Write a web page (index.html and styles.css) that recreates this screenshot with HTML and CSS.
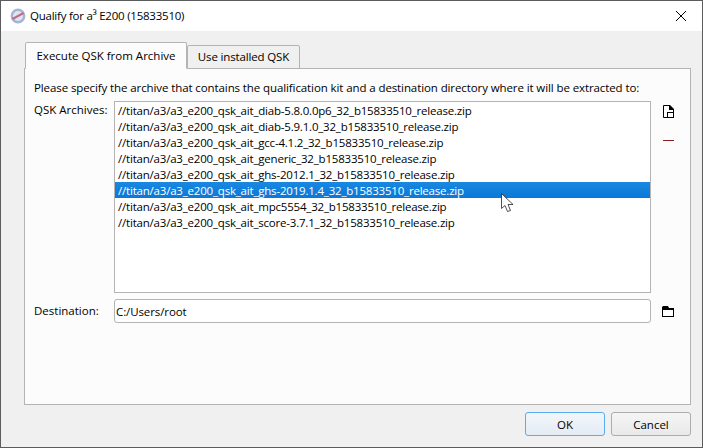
FILE: index.html
```html
<!DOCTYPE html>
<html lang="en">
<head>
<meta charset="utf-8">
<title>Qualify for a³ E200 (15833510)</title>
<link rel="stylesheet" href="styles.css">
</head>
<body>
<div class="window">
  <header class="titlebar">
    <svg class="app-icon" width="16" height="16" viewBox="0 0 16 16">
      <circle cx="8" cy="8" r="6.2" fill="#dfe5f0" stroke="#a3b4d4" stroke-width="2.4"/>
      <path d="M2.5 11 L13.5 5" stroke="#c46a84" stroke-width="2"/>
    </svg>
    <span class="title">Qualify for a³ E200 (15833510)</span>
    <svg class="close" width="10" height="10" viewBox="0 0 10 10">
      <path d="M0 0 L10 10 M10 0 L0 10" stroke="#000" stroke-width="1" fill="none"/>
    </svg>
  </header>
  <main class="content">
    <div class="tabs">
      <div class="tab active">Execute QSK from Archive</div>
      <div class="tab">Use installed QSK</div>
    </div>
    <section class="pane">
      <p class="intro">Please specify the archive that contains the qualification kit and a destination directory where it will be extracted to:</p>
      <div class="row archives">
        <label class="label">QSK Archives:</label>
        <ul class="list">
          <li>//titan/a3/a3_e200_qsk_ait_diab-5.8.0.0p6_32_b15833510_release.zip</li>
          <li>//titan/a3/a3_e200_qsk_ait_diab-5.9.1.0_32_b15833510_release.zip</li>
          <li>//titan/a3/a3_e200_qsk_ait_gcc-4.1.2_32_b15833510_release.zip</li>
          <li>//titan/a3/a3_e200_qsk_ait_generic_32_b15833510_release.zip</li>
          <li>//titan/a3/a3_e200_qsk_ait_ghs-2012.1_32_b15833510_release.zip</li>
          <li class="selected">//titan/a3/a3_e200_qsk_ait_ghs-2019.1.4_32_b15833510_release.zip</li>
          <li>//titan/a3/a3_e200_qsk_ait_mpc5554_32_b15833510_release.zip</li>
          <li>//titan/a3/a3_e200_qsk_ait_score-3.7.1_32_b15833510_release.zip</li>
        </ul>
        <div class="side">
          <svg width="11" height="13" viewBox="0 0 11 13">
            <path d="M.5.5 H6.5 L10.5 4.5 V12.5 H.5 Z" fill="#fff" stroke="#000"/>
            <path d="M6 0 H7 L11 4 V5 H6 Z" fill="#000"/>
            <rect x="4.5" y="7.5" width="6" height="5" fill="#fff" stroke="#000"/>
          </svg>
          <span class="minus"></span>
        </div>
      </div>
      <div class="row destination">
        <label class="label">Destination:</label>
        <div class="input">C:/Users/root</div>
        <div class="side">
          <svg width="12" height="11" viewBox="0 0 12 11">
            <path d="M1 0 H6 L7 2 H12 V11 H0 V1 Z" fill="#000"/>
            <rect x="1" y="4" width="10" height="6" fill="#fff"/>
          </svg>
        </div>
      </div>
    </section>
    <footer class="buttons">
      <button class="btn default">OK</button>
      <button class="btn">Cancel</button>
    </footer>
  </main>
  <svg class="cursor" width="13" height="20" viewBox="0 0 13 20">
    <path d="M.5.5 V15.5 L4 12.5 L6.5 18.5 L9.5 17.5 L7 11.5 H12 Z" fill="#fff" stroke="#222" stroke-width=".8"/>
  </svg>
</div>
</body>
</html>
```

FILE: styles.css
```css
* { box-sizing: border-box; }
html, body { margin: 0; padding: 0; }
body {
  width: 703px;
  height: 448px;
  overflow: hidden;
  font-family: "Open Sans", "Noto Sans", "Liberation Sans", sans-serif;
  font-size: 11.5px;
  color: #000;
}
.window {
  position: relative;
  width: 703px;
  height: 448px;
  border: 1px solid #5c5c5c;
  background: #f0f0f0;
  display: flex;
  flex-direction: column;
}
.titlebar {
  height: 30px;
  background: #fff;
  display: flex;
  align-items: center;
  padding: 0 16px 0 9px;
  flex: none;
}
.app-icon { flex: none; }
.title { margin-left: 4px; font-size: 11.5px; letter-spacing: -0.23px; flex: 1; position: relative; top: -1px; }
.close { flex: none; }
.content {
  flex: 1;
  display: flex;
  flex-direction: column;
  padding: 11px 11px 10px 23px;
  min-height: 0;
}
.tabs {
  display: flex;
  align-items: flex-end;
  height: 27px;
  padding-left: 1px;
  margin-bottom: -1px;
  position: relative;
  z-index: 1;
}
.tab {
  height: 24px;
  width: 113px;
  margin-left: -1px;
  border: 1px solid #b4b4b4;
  border-radius: 2px 2px 0 0;
  background: #f0f0f0;
  display: flex;
  align-items: center;
  justify-content: center;
  padding-bottom: 1px;
  letter-spacing: -0.15px;
}
.tab.active {
  height: 27px;
  width: 162px;
  margin-left: 0;
  margin-right: 1px;
  background: #fcfcfc;
  border-bottom-color: #fcfcfc;
  padding-bottom: 0;
  letter-spacing: 0;
}
.pane {
  height: 337px;
  background: #fcfcfc;
  border: 1px solid #b4b4b4;
  padding: 8px 11px 0 9px;
  display: flex;
  flex-direction: column;
}
.intro { margin: 0 0 4px; height: 20px; line-height: 21px; letter-spacing: -0.1px; white-space: nowrap; }
.row { display: flex; }
.label { width: 80px; flex: none; }
.archives .label { line-height: 16px; padding-top: 1px; }
.list {
  list-style: none;
  margin: 0;
  padding: 0;
  width: 537px;
  height: 192px;
  flex: none;
  background: #fff;
  border: 1px solid #b4b4b4;
}
.list li {
  height: 16px;
  line-height: 18px;
  padding-left: 3px;
  letter-spacing: -0.2px;
  white-space: nowrap;
}
.list li.selected {
  background: linear-gradient(#1a87e0, #0a78d7);
  color: #fff;
}
.side {
  width: 34px;
  flex: none;
  display: flex;
  flex-direction: column;
  align-items: center;
}
.archives .side { padding-top: 4px; }
.minus {
  display: block;
  width: 11px;
  height: 1px;
  margin-top: 22px;
  background: #8c1c1c;
}
.destination { margin-top: 6px; align-items: center; }
.destination .label { line-height: 24px; }
.input {
  width: 537px;
  height: 24px;
  line-height: 23px;
  flex: none;
  background: #fff;
  border: 1px solid #b4b4b4;
  border-radius: 3px;
  padding-left: 1px;
  letter-spacing: -0.1px;
}
.buttons {
  display: flex;
  justify-content: flex-end;
  gap: 6px;
  margin-top: 7px;
}
.btn {
  width: 80px;
  height: 24px;
  padding: 0;
  font: inherit;
  color: #000;
  background: linear-gradient(#f5f5f5, #e9e9e9);
  border: 1px solid #adadad;
  border-radius: 3px;
}
.btn.default {
  background: linear-gradient(#f2f6fb, #e4ebf3);
  border-color: #57aeea;
}
.cursor {
  position: absolute;
  left: 500px;
  top: 192px;
}
```
